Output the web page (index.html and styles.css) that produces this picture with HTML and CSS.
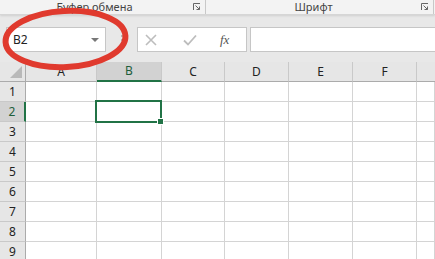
FILE: index.html
```html
<!DOCTYPE html>
<html lang="ru">
<head>
    <meta charset="UTF-8">
    <title>Книга1 - Excel</title>
    <link rel="stylesheet" href="styles.css">
</head>
<body>

<div class="window">
    <!-- лента: подписи групп -->
    <div class="ribbon">
        <div class="group group-clip">
            <span class="group-title">Буфер обмена</span>
            <svg class="launcher" width="8" height="8" viewBox="0 0 8 8">
                <path d="M0.5 7V0.5H7" fill="none" stroke="#666" stroke-width="1"/>
                <path d="M2.5 2.5L6.5 6.5M3.5 6.5H6.5V3.5" fill="none" stroke="#666" stroke-width="1"/>
            </svg>
        </div>
        <div class="group group-font">
            <span class="group-title">Шрифт</span>
            <svg class="launcher" width="8" height="8" viewBox="0 0 8 8">
                <path d="M0.5 7V0.5H7" fill="none" stroke="#666" stroke-width="1"/>
                <path d="M2.5 2.5L6.5 6.5M3.5 6.5H6.5V3.5" fill="none" stroke="#666" stroke-width="1"/>
            </svg>
        </div>
    </div>

    <!-- строка формул -->
    <div class="formula-bar">
        <div class="name-box">
            <span>B2</span>
            <svg width="8" height="4" viewBox="0 0 8 4"><path d="M0 0H8L4 4Z" fill="#777"/></svg>
        </div>
        <div class="grip"><i></i><i></i><i></i></div>
        <div class="fx-buttons">
            <svg class="btn-cancel" width="12" height="12" viewBox="0 0 12 12">
                <path d="M1 1L11 11M11 1L1 11" stroke="#bdbdbd" stroke-width="1.6"/>
            </svg>
            <svg class="btn-enter" width="14" height="12" viewBox="0 0 14 12">
                <path d="M1 6.5L5 10.5L13 1.5" fill="none" stroke="#bdbdbd" stroke-width="1.8"/>
            </svg>
            <span class="btn-fx">fx</span>
        </div>
        <div class="formula-input"></div>
    </div>

    <!-- сетка листа -->
    <div class="sheet">
        <div class="cell corner">
            <svg width="12" height="12" viewBox="0 0 12 12"><path d="M12 0V12H0Z" fill="#b9b9b9"/></svg>
        </div>
        <div class="cell col-head">A</div>
        <div class="cell col-head active">B</div>
        <div class="cell col-head">C</div>
        <div class="cell col-head">D</div>
        <div class="cell col-head">E</div>
        <div class="cell col-head">F</div>
        <div class="cell col-head last"></div>

        <div class="cell row-head">1</div>
        <div class="cell"></div><div class="cell"></div><div class="cell"></div><div class="cell"></div><div class="cell"></div><div class="cell"></div><div class="cell"></div>
        <div class="cell row-head active">2</div>
        <div class="cell"></div><div class="cell"></div><div class="cell"></div><div class="cell"></div><div class="cell"></div><div class="cell"></div><div class="cell"></div>
        <div class="cell row-head">3</div>
        <div class="cell"></div><div class="cell"></div><div class="cell"></div><div class="cell"></div><div class="cell"></div><div class="cell"></div><div class="cell"></div>
        <div class="cell row-head">4</div>
        <div class="cell"></div><div class="cell"></div><div class="cell"></div><div class="cell"></div><div class="cell"></div><div class="cell"></div><div class="cell"></div>
        <div class="cell row-head">5</div>
        <div class="cell"></div><div class="cell"></div><div class="cell"></div><div class="cell"></div><div class="cell"></div><div class="cell"></div><div class="cell"></div>
        <div class="cell row-head">6</div>
        <div class="cell"></div><div class="cell"></div><div class="cell"></div><div class="cell"></div><div class="cell"></div><div class="cell"></div><div class="cell"></div>
        <div class="cell row-head">7</div>
        <div class="cell"></div><div class="cell"></div><div class="cell"></div><div class="cell"></div><div class="cell"></div><div class="cell"></div><div class="cell"></div>
        <div class="cell row-head">8</div>
        <div class="cell"></div><div class="cell"></div><div class="cell"></div><div class="cell"></div><div class="cell"></div><div class="cell"></div><div class="cell"></div>
        <div class="cell row-head">9</div>
        <div class="cell"></div><div class="cell"></div><div class="cell"></div><div class="cell"></div><div class="cell"></div><div class="cell"></div><div class="cell"></div>

        <!-- выделенная ячейка B2 -->
        <div class="selection"><span class="handle"></span></div>
    </div>

    <!-- красный овал вокруг поля имени -->
    <svg class="mark" width="435" height="259" viewBox="0 0 435 259">
        <ellipse cx="65.5" cy="39" rx="60" ry="28" transform="rotate(-3 65.5 39)"
                 fill="none" stroke="#e03a2e" stroke-width="6"/>
    </svg>
</div>

</body>
</html>
```

FILE: styles.css
```css
body {
    margin: 0;
    font-family: "Noto Sans", "Open Sans", sans-serif;
    background: #fff;
    overflow: hidden;
}
.window {
    position: relative;
    width: 435px;
    height: 259px;
    overflow: hidden;
}

/* лента */
.ribbon {
    display: flex;
    height: 14px;
    background: #f3f3f3;
    border-bottom: 1px solid #d6d6d6;
    box-shadow: 0 1px 2px #cfcfcf;
    position: relative;
    z-index: 1;
}
.group {
    position: relative;
    display: flex;
    justify-content: center;
    align-items: center;
    border-right: 1px solid #c8c8c8;
    height: 14px;
}
.group-clip {
    width: 205px;
}
.group-font {
    width: 227px;
}
.group-title {
    font-size: 11px;
    color: #444;
    line-height: 14px;
    margin-top: -1px;
}
.group-clip .group-title {
    margin-right: 16px;
}
.group-font .group-title {
    margin-right: 12px;
}
.launcher {
    position: absolute;
    right: 4px;
    top: 3px;
}

/* строка формул */
.formula-bar {
    display: flex;
    align-items: center;
    height: 47px;
    background: #e8e8e8;
    padding-left: 6px;
    box-sizing: border-box;
    padding-top: 2px;
}
.name-box {
    display: flex;
    align-items: center;
    justify-content: space-between;
    width: 100px;
    height: 25px;
    box-sizing: border-box;
    background: #fff;
    border: 1px solid #c6c6c6;
    padding: 0 6px 0 6px;
    font-size: 12px;
    color: #222;
}
.grip {
    display: flex;
    flex-direction: column;
    gap: 2px;
    margin: 0 14px 0 15px;
}
.grip i {
    display: block;
    width: 2px;
    height: 2px;
    background: #b5b5b5;
}
.fx-buttons {
    display: flex;
    align-items: center;
    width: 110px;
    height: 25px;
    box-sizing: border-box;
    background: #fff;
    border: 1px solid #c6c6c6;
}
.btn-cancel {
    margin-left: 7px;
}
.btn-enter {
    margin-left: 26px;
}
.btn-fx {
    margin-left: 23px;
    font-family: "Liberation Serif", serif;
    font-style: italic;
    font-size: 13px;
    color: #555;
}
.formula-input {
    flex: 1;
    height: 25px;
    box-sizing: border-box;
    margin-left: 3px;
    background: #fff;
    border: 1px solid #c6c6c6;
    border-right: none;
}

/* сетка */
.sheet {
    position: relative;
    display: grid;
    grid-template-columns: 26px 71px 65px 63px 64px 64px 64px 1fr;
    grid-template-rows: 20px;
    grid-auto-rows: 20px;
}
.cell {
    box-sizing: border-box;
    border-right: 1px solid #d4d4d4;
    border-bottom: 1px solid #d4d4d4;
}
.corner {
    background: #e6e6e6;
    border-right: 1px solid #ababab;
    border-bottom: 1px solid #ababab;
    display: flex;
    align-items: flex-end;
    justify-content: flex-end;
    padding: 0 3px 3px 0;
}
.col-head {
    background: #e6e6e6;
    border-right: 1px solid #c9c9c9;
    border-bottom: 1px solid #ababab;
    text-align: center;
    font-size: 12px;
    line-height: 19px;
    color: #222;
}
.col-head.last {
    border-right: none;
}
.col-head.active {
    background: #d2d2d2;
    border-bottom: 2px solid #217346;
    color: #1e5e3a;
    line-height: 18px;
}
.row-head {
    background: #e6e6e6;
    border-right: 1px solid #ababab;
    border-bottom: 1px solid #c9c9c9;
    text-align: center;
    font-size: 12px;
    line-height: 19px;
    color: #222;
}
.row-head.active {
    background: #d2d2d2;
    border-right: 2px solid #217346;
    color: #1e5e3a;
}

/* выделение */
.selection {
    position: absolute;
    left: 95px;
    top: 38px;
    width: 67px;
    height: 23px;
    box-sizing: border-box;
    border: 2px solid #217346;
}
.handle {
    position: absolute;
    right: -4px;
    bottom: -4px;
    width: 5px;
    height: 5px;
    background: #217346;
    border: 1px solid #fff;
}

.mark {
    position: absolute;
    left: 0;
    top: 0;
    pointer-events: none;
    z-index: 2;
}
```
